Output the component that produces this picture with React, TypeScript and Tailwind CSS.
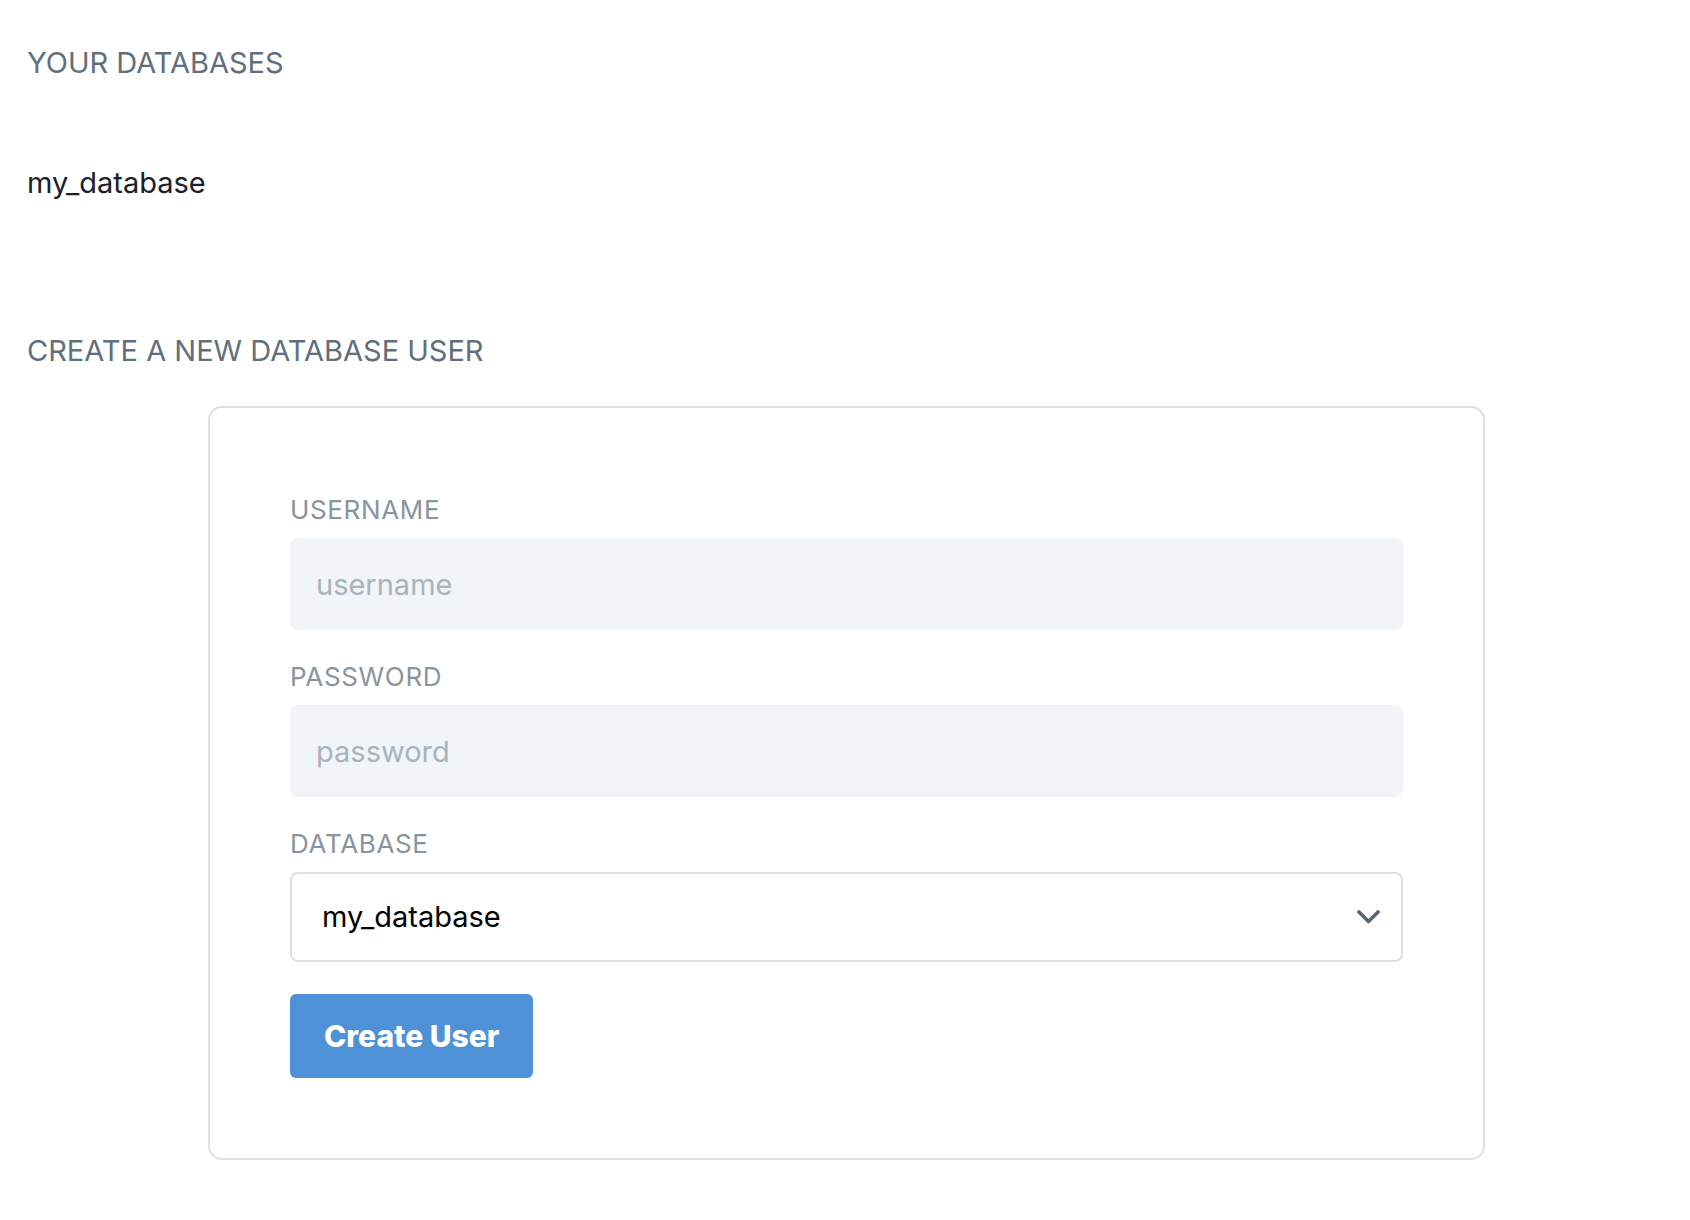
import { useState } from "react";

const font = { fontFamily: "Inter, 'Noto Sans', sans-serif" };

const Field = ({
  label,
  children,
}: {
  label: string;
  children: React.ReactNode;
}) => (
  <div className="mb-[27px]">
    <label className="block text-[26px] leading-[39px] tracking-wide text-[#8795a1] mb-[9px]">
      {label}
    </label>
    {children}
  </div>
);

export default function App() {
  const [username, setUsername] = useState("");
  const [password, setPassword] = useState("");
  const [database, setDatabase] = useState("my_database");

  return (
    <div className="min-h-screen bg-white px-[27px] pt-[41px] pb-[40px]" style={font}>
      <h2 className="text-[29px] leading-[43px] text-[#606f7b]">YOUR DATABASES</h2>

      <ul className="mt-[77px]">
        <li className="text-[29px] leading-[43px] text-[#1a202c]">my_database</li>
      </ul>

      <h2 className="mt-[125px] text-[29px] leading-[43px] text-[#606f7b]">
        CREATE A NEW DATABASE USER
      </h2>

      <form
        className="mt-[34px] ml-[181px] w-[1277px] rounded-[14px] border-2 border-[#dae1e7] px-[80px] pt-[82px] pb-[80px]"
        onSubmit={(e) => e.preventDefault()}
      >
        <Field label="USERNAME">
          <input
            type="text"
            value={username}
            onChange={(e) => setUsername(e.target.value)}
            placeholder="username"
            className="w-full h-[92px] rounded-lg bg-[#f1f5f8] px-[26px] text-[29px] text-[#22292f] placeholder:text-[#a8b3bd] outline-none"
          />
        </Field>

        <Field label="PASSWORD">
          <input
            type="password"
            value={password}
            onChange={(e) => setPassword(e.target.value)}
            placeholder="password"
            className="w-full h-[92px] rounded-lg bg-[#f1f5f8] px-[26px] text-[29px] text-[#22292f] placeholder:text-[#a8b3bd] outline-none"
          />
        </Field>

        <Field label="DATABASE">
          <div className="relative">
            <select
              value={database}
              onChange={(e) => setDatabase(e.target.value)}
              className="w-full h-[90px] appearance-none rounded-lg border-2 border-[#dae1e7] bg-white pl-[30px] pr-[80px] text-[29px] text-black outline-none"
            >
              <option value="my_database">my_database</option>
            </select>
            <svg
              className="pointer-events-none absolute right-[23px] top-[38px]"
              width="23"
              height="14"
              viewBox="0 0 23 14"
              fill="none"
            >
              <path
                d="M2 2l9.5 9.5L21 2"
                stroke="#5a6673"
                strokeWidth="3.6"
                strokeLinecap="round"
                strokeLinejoin="round"
              />
            </svg>
          </div>
        </Field>

        <button
          type="submit"
          className="mt-[5px] h-[84px] rounded-md bg-[#4e91d6] px-[34px] text-[30px] font-extrabold text-white hover:bg-[#3f82c8]"
        >
          Create User
        </button>
      </form>
    </div>
  );
}
